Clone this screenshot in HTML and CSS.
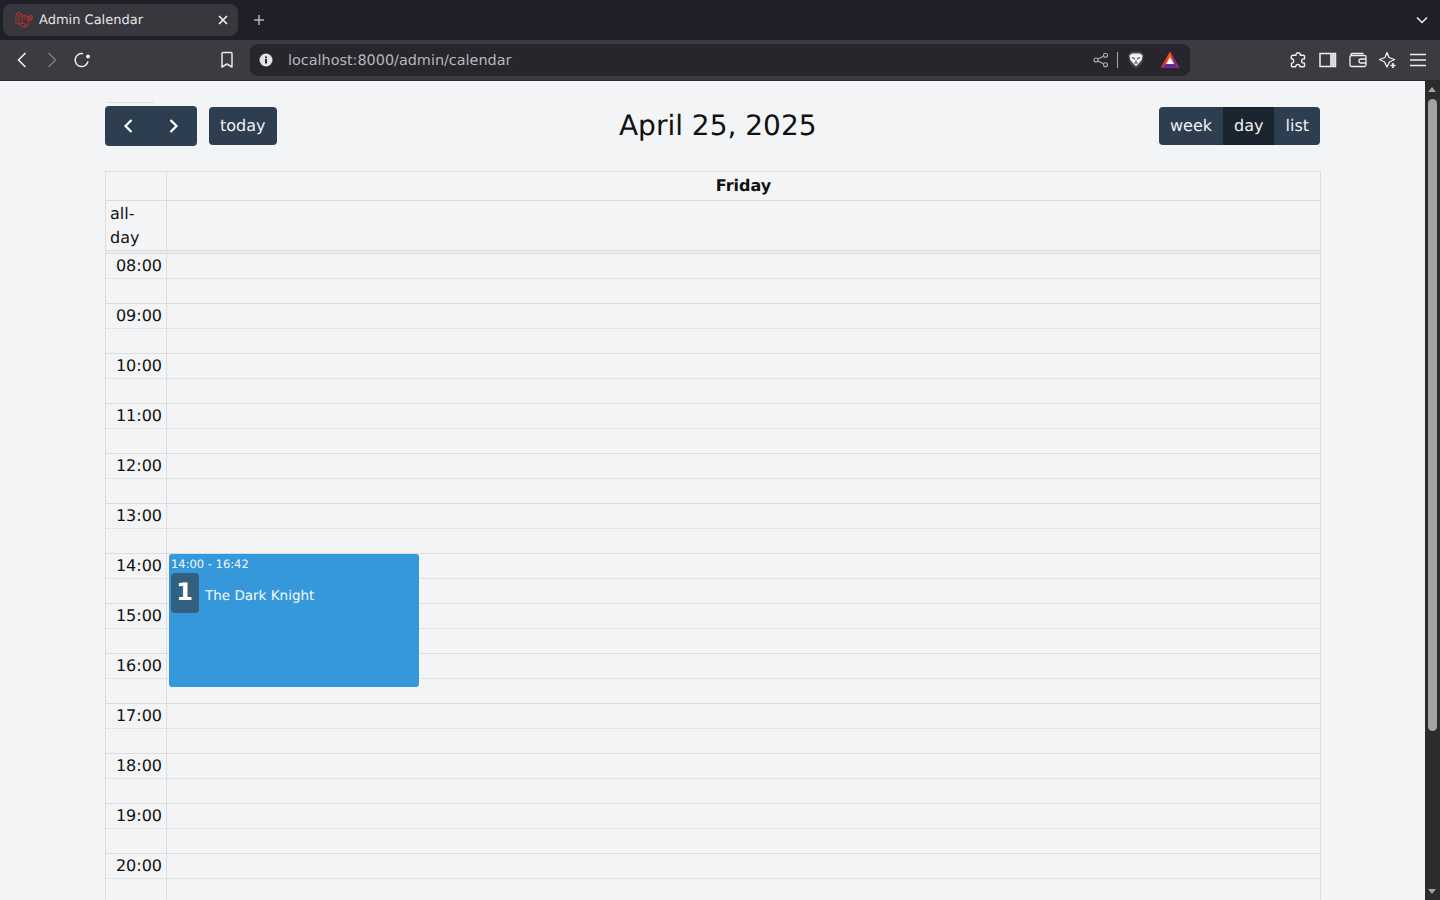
FILE: index.html
```html
<!DOCTYPE html>
<html lang="en">
<head>
  <meta charset="UTF-8">
  <title>Admin Calendar</title>
  <link rel="stylesheet" href="styles.css">
</head>
<body>
  <div class="tabstrip">
    <div class="tab">
      <svg class="tab-logo" width="18" height="18" viewBox="0 0 18 18" fill="none" stroke="#b5302b" stroke-width="1" stroke-linejoin="round">
        <path d="M1 3 4 1.300 7 3v8.500l6 3.300-3.200 1.900L4 13.300 1 11.600z"/>
        <path d="M1 3l3 1.700L7 3M4 4.700v8.600M7 11.500l-3 1.800M9.800 16.700v-3.500L7 11.500"/>
        <path d="M7 5.800 10 4l3 1.800L16 4l1.200.8v3.400L13 10.600v4.200M10 4v3.400l3 1.700M13 5.800v3.300l4.200-.900M13 5.800 16 7.500V4"/>
      </svg>
      <span class="tab-title">Admin Calendar</span>
      <svg width="10" height="10" viewBox="0 0 10 10" stroke="#f0f0f0" stroke-width="1.700"><path d="M1 1l8 8M9 1l-8 8"/></svg>
    </div>
    <svg class="newtab" width="12" height="12" viewBox="0 0 12 12" stroke="#b4b4b8" stroke-width="1.500"><path d="M6 1v10M1 6h10"/></svg>
    <svg class="tablist" width="12" height="8" viewBox="0 0 12 8" fill="none" stroke="#f0f0f0" stroke-width="1.500"><path d="M1 1.500l5 5 5-5"/></svg>
  </div>

  <div class="toolbar">
    <svg class="nav-back" width="12" height="18" viewBox="0 0 12 18" fill="none" stroke="#f0f0f0" stroke-width="1.600"><path d="M9.500 2L2.500 9l7 7"/></svg>
    <svg class="nav-forward" width="12" height="18" viewBox="0 0 12 18" fill="none" stroke="#77777b" stroke-width="1.600"><path d="M2.500 2l7 7-7 7"/></svg>
    <svg class="nav-reload" width="18" height="18" viewBox="0 0 18 18" fill="none" stroke="#f0f0f0" stroke-width="1.500"><path d="M15 10.500A6.500 6.500 0 1 1 10 2.700"/><circle cx="15" cy="5.500" r="2" fill="#f0f0f0" stroke="none"/></svg>
    <svg class="nav-bookmark" width="14" height="18" viewBox="0 0 14 18" fill="none" stroke="#e8e8e8" stroke-width="1.500" stroke-linejoin="round"><path d="M2 2.500a1 1 0 0 1 1-1h8a1 1 0 0 1 1 1V16l-5-3-5 3z"/></svg>
    <div class="urlbar">
      <svg width="14" height="14" viewBox="0 0 14 14"><circle cx="7" cy="7" r="6.500" fill="#e4e4e4"/><rect x="6" y="6" width="2" height="4.500" fill="#26262c"/><rect x="6" y="3.500" width="2" height="1.700" fill="#26262c"/></svg>
      <span class="url">localhost:8000/admin/calendar</span>
      <svg class="url-share" width="16" height="16" viewBox="0 0 16 16" fill="none" stroke="#b0b0b4" stroke-width="1.100"><circle cx="3" cy="8" r="2"/><circle cx="12.500" cy="3.300" r="2"/><circle cx="12.500" cy="12.700" r="2"/><path d="M4.800 7.100l5.900-2.900M4.800 8.900l5.900 2.900"/></svg>
      <span class="url-sep"></span>
      <svg class="url-brave" width="16" height="18" viewBox="0 0 16 18">
        <path d="M3.500 .500h9L15.800 4 15 9.500c-.5 3-4 6-7 8-3-2-6.500-5-7-8L.2 4z" fill="#4a4a56"/>
        <path d="M4 2.500h8l2.500 2-.8 4.500-3 3.500L8 15l-2.700-2.500-3-3.500-.8-4.500z" fill="#f0f0f0"/>
        <path d="M4 6.500l3 1.500M12 6.500L9 8M8 9.500v2.500M6.300 12h3.400" stroke="#4a4a56" stroke-width="1.100" fill="none"/>
      </svg>
      <svg class="url-bat" width="20" height="18" viewBox="0 0 20 18">
        <path d="M10 .500L1 16.500h18z" fill="#ff5a1f"/>
        <path d="M10 .500L1 16.500 6 13z" fill="#f0341f"/>
        <path d="M10 .500L19 16.500 14 13z" fill="#8d2a90"/>
        <path d="M1 16.500L6 13h8l5 3.500z" fill="#5f2a9c"/>
        <path d="M10 6.500L6 13h8z" fill="#fff"/>
      </svg>
    </div>
    <div class="toolbar-right">
      <svg width="18" height="18" viewBox="0 0 18 18" fill="none" stroke="#f0f0f0" stroke-width="1.400" stroke-linejoin="round"><path d="M7 3.500a2.200 2.200 0 0 1 4.300 0v.7h3.200a1 1 0 0 1 1 1v2.700h-.8a2 2 0 0 0 0 4.200h.8v2.700a1 1 0 0 1-1 1H11v-.6a2.200 2.200 0 0 0-4.300 0v.6H3.500a1 1 0 0 1-1-1v-2.700h.5a2.200 2.200 0 0 0 0-4.300h-.7V5.700a1.500 1.500 0 0 1 1.500-1.500H7z"/></svg>
      <svg width="18" height="16" viewBox="0 0 18 16"><rect x="1" y="1.500" width="15.500" height="13" fill="none" stroke="#f0f0f0" stroke-width="1.500"/><rect x="11" y="1.500" width="5.500" height="13" fill="#d8d8d8"/></svg>
      <svg width="18" height="16" viewBox="0 0 18 16" fill="none" stroke="#f0f0f0" stroke-width="1.300"><path d="M2 3.500V2.500a1 1 0 0 1 1-1h11.500"/><rect x="1" y="3.500" width="16" height="11" rx="1.500"/><path d="M17 7h-5a2 2 0 0 0 0 4h5"/></svg>
      <svg width="18" height="18" viewBox="0 0 18 18" fill="none" stroke="#f0f0f0" stroke-width="1.300" stroke-linejoin="round"><path d="M8 1.500l2 5 5.500 2-5 2.500L8 16l-2.500-5-5-2.500 5.500-2z"/><path d="M14 12v5M11.500 14.500h5" stroke-width="1.700"/></svg>
      <svg width="18" height="14" viewBox="0 0 18 14" stroke="#f0f0f0" stroke-width="1.500"><path d="M1 1.500h16M1 7h16M1 12.500h16"/></svg>
    </div>
  </div>

  <div class="viewport">
    <main class="page">
      <span class="stray-line"></span>
      <header class="cal-toolbar">
        <div class="cal-left">
          <div class="btn-group-nav">
            <button class="btn-arrow"><svg width="12" height="16" viewBox="0 0 12 16" fill="none" stroke="#fff" stroke-width="2.200"><path d="M9.500 2l-6 6 6 6"/></svg></button>
            <button class="btn-arrow"><svg width="12" height="16" viewBox="0 0 12 16" fill="none" stroke="#fff" stroke-width="2.200"><path d="M2.500 2l6 6-6 6"/></svg></button>
          </div>
          <button class="btn">today</button>
        </div>
        <h2 class="cal-title">April 25, 2025</h2>
        <div class="btn-group">
          <button class="btn">week</button>
          <button class="btn active">day</button>
          <button class="btn">list</button>
        </div>
      </header>

      <section class="cal">
        <div class="head-row">
          <div class="axis"></div>
          <div class="day-name">Friday</div>
        </div>
        <div class="allday-row">
          <div class="axis allday-label">all-day</div>
          <div class="day-col"></div>
        </div>
        <div class="divider"></div>
        <div class="slots">
          <div class="hour"><div class="axis time">08:00</div><div class="day-col"></div></div>
          <div class="hour"><div class="axis time">09:00</div><div class="day-col"></div></div>
          <div class="hour"><div class="axis time">10:00</div><div class="day-col"></div></div>
          <div class="hour"><div class="axis time">11:00</div><div class="day-col"></div></div>
          <div class="hour"><div class="axis time">12:00</div><div class="day-col"></div></div>
          <div class="hour"><div class="axis time">13:00</div><div class="day-col"></div></div>
          <div class="hour"><div class="axis time">14:00</div><div class="day-col"></div></div>
          <div class="hour"><div class="axis time">15:00</div><div class="day-col"></div></div>
          <div class="hour"><div class="axis time">16:00</div><div class="day-col"></div></div>
          <div class="hour"><div class="axis time">17:00</div><div class="day-col"></div></div>
          <div class="hour"><div class="axis time">18:00</div><div class="day-col"></div></div>
          <div class="hour"><div class="axis time">19:00</div><div class="day-col"></div></div>
          <div class="hour"><div class="axis time">20:00</div><div class="day-col"></div></div>
          <div class="event">
            <div class="event-time">14:00 - 16:42</div>
            <div class="event-body">
              <span class="event-badge">1</span>
              <span class="event-title">The Dark Knight</span>
            </div>
          </div>
        </div>
      </section>
    </main>

    <div class="scrollbar">
      <span class="arrow-up"></span>
      <span class="thumb"></span>
      <span class="arrow-down"></span>
    </div>
  </div>
</body>
</html>
```

FILE: styles.css
```css
* {
  box-sizing: border-box;
}
html, body {
  margin: 0;
  height: 900px;
  overflow: hidden;
}
body {
  display: flex;
  flex-direction: column;
  font-family: "DejaVu Sans", sans-serif;
  text-rendering: geometricPrecision;
  background: #f3f4f6;
}

/* browser chrome */
.tabstrip {
  height: 40px;
  flex: none;
  display: flex;
  align-items: center;
  background: #1f1f27;
  padding: 4px 12px 4px 3px;
}
.tab {
  width: 235px;
  height: 32px;
  display: flex;
  align-items: center;
  padding: 0 10px 0 12px;
  background: #37373d;
  border-radius: 8px;
  color: #e4e4e6;
}
.tab-logo {
  flex: none;
}
.tab-title {
  flex: 1;
  margin-left: 6px;
  font-size: 13px;
}
.newtab {
  margin-left: 15px;
}
.tablist {
  margin-left: auto;
}
.toolbar {
  height: 41px;
  flex: none;
  display: flex;
  align-items: center;
  background: #3b3b41;
  border-bottom: 1px solid #2c2c30;
  padding-left: 16px;
}
.nav-forward {
  margin-left: 18px;
}
.nav-reload {
  margin-left: 15px;
}
.nav-bookmark {
  margin-left: 129px;
}
.urlbar {
  width: 940px;
  height: 32px;
  margin-left: 16px;
  display: flex;
  align-items: center;
  padding: 0 10px 0 9px;
  background: #26262c;
  border-radius: 8px;
}
.url {
  flex: 1;
  margin-left: 15px;
  padding-top: 1px;
  font-size: 14.400px;
  color: #b8b8bc;
}
.url-sep {
  width: 1px;
  height: 16px;
  margin: 0 10px 0 8px;
  background: #a8a8ac;
}
.url-bat {
  margin-left: 16px;
}
.toolbar-right {
  flex: 1;
  display: flex;
  align-items: center;
  gap: 12px;
  padding-left: 99px;
}

/* page */
.viewport {
  flex: 1;
  min-height: 0;
  display: flex;
}
.page {
  position: relative;
  flex: 1;
  min-width: 0;
  padding: 25px 104px 0 105px;
  overflow: hidden;
}
.stray-line {
  position: absolute;
  top: 21px;
  left: 108px;
  width: 46px;
  height: 1px;
  background: #dcdddf;
}
.cal-toolbar {
  display: flex;
  align-items: center;
  justify-content: space-between;
  height: 40px;
  margin-bottom: 25px;
}
.cal-left {
  display: flex;
  align-items: center;
  gap: 12px;
}
.btn-group-nav {
  width: 92px;
  height: 40px;
  display: flex;
  background: #2c3e50;
  border-radius: 4px;
}
.btn-arrow {
  flex: 1;
  display: flex;
  align-items: center;
  justify-content: center;
  padding: 0;
  background: none;
  border: none;
}
.btn {
  height: 38px;
  padding: 0 11px 1px;
  font-family: inherit;
  font-size: 16px;
  text-rendering: inherit;
  color: #f2f2f2;
  background: #2c3e50;
  border: none;
  border-radius: 4px;
}
.btn-group {
  display: flex;
  margin-right: 1px;
}
.btn-group .btn {
  border-radius: 0;
}
.btn-group .btn:first-child {
  border-radius: 4px 0 0 4px;
}
.btn-group .btn:last-child {
  border-radius: 0 4px 4px 0;
}
.btn.active {
  background: #1a252f;
}
.cal-title {
  margin: 0 0 2px 0;
  font-size: 28px;
  font-weight: 400;
  color: #111;
}

/* calendar grid */
.cal {
  border: 1px solid #dddddd;
  border-bottom: none;
  font-size: 16px;
  color: #111;
}
.head-row,
.allday-row,
.hour {
  display: flex;
}
.axis {
  width: 61px;
  flex: none;
  border-right: 1px solid #dddddd;
}
.head-row {
  height: 29px;
  border-bottom: 1px solid #dddddd;
}
.day-name {
  flex: 1;
  text-align: center;
  font-size: 16px;
  font-weight: 700;
  line-height: 28px;
}
.allday-row {
  height: 49px;
}
.allday-label {
  padding: 1px 20px 0 4px;
  line-height: 24px;
}
.day-col {
  flex: 1;
}
.divider {
  height: 4px;
  background: #ebecee;
  border-top: 1px solid #dddddd;
  border-bottom: 1px solid #dddddd;
}
.slots {
  position: relative;
}
.hour {
  height: 50px;
  border-bottom: 1px solid #dddddd;
}
.hour .day-col,
.time {
  background-image: linear-gradient(to right, #d4d4d4 1px, transparent 1px);
  background-size: 2px 1px;
  background-repeat: repeat-x;
  background-position: 0 24px;
}
.time {
  padding: 0 4px 0 0;
  text-align: right;
  line-height: 24px;
}
.event {
  position: absolute;
  top: 300px;
  left: 63px;
  width: 250px;
  height: 133px;
  padding: 3px 2px 2px;
  background: #3498db;
  border-radius: 3px;
  color: #f4f8fb;
}
.event-time {
  font-size: 11.500px;
  line-height: 14px;
}
.event-body {
  display: flex;
  align-items: center;
  gap: 6px;
  margin-top: 2px;
}
.event-badge {
  width: 28px;
  height: 40px;
  display: flex;
  align-items: center;
  justify-content: center;
  padding: 0 1px 3px 0;
  background: #34607f;
  border-radius: 4px;
  font-size: 24px;
  font-weight: 700;
  color: #fff;
}
.event-title {
  font-size: 13.500px;
  margin-top: 5px;
}

/* scrollbar */
.scrollbar {
  width: 15px;
  flex: none;
  position: relative;
  background: #2c2c2c;
}
.thumb {
  position: absolute;
  top: 18px;
  left: 3px;
  width: 9px;
  height: 632px;
  background: #a3a3a3;
  border-radius: 5px;
}
.arrow-up,
.arrow-down {
  position: absolute;
  left: 3px;
  width: 0;
  height: 0;
  border-left: 4.500px solid transparent;
  border-right: 4.500px solid transparent;
}
.arrow-up {
  top: 6px;
  border-bottom: 5px solid #a3a3a3;
}
.arrow-down {
  bottom: 6px;
  border-top: 5px solid #a3a3a3;
}
```
